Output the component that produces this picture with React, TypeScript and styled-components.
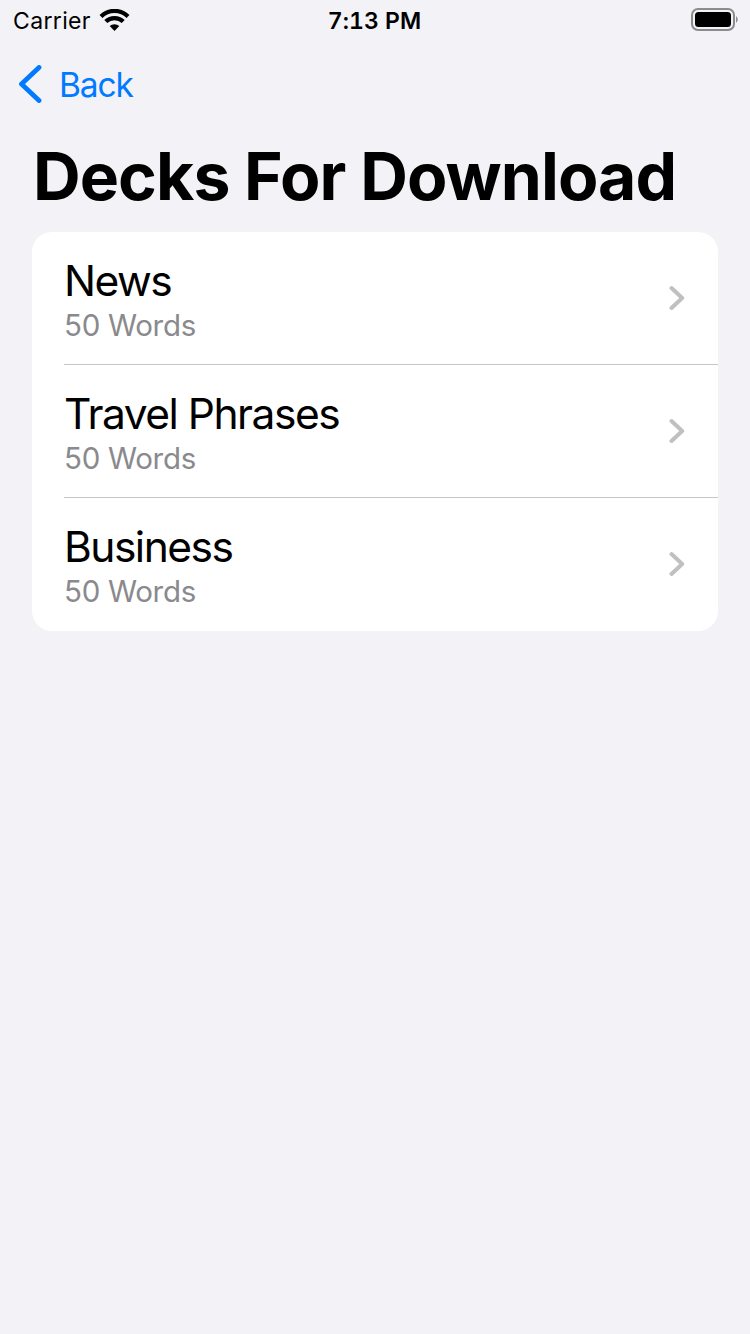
import React from "react";
import styled, { createGlobalStyle } from "styled-components";

const GlobalStyle = createGlobalStyle`
  * { box-sizing: border-box; }
  body { margin: 0; background: #f2f2f7; font-family: Inter, sans-serif; color: #000; }
  h1, p, ul { margin: 0; padding: 0; }
`;

const Screen = styled.main`
  width: 750px;
  min-height: 1334px;
  background: #f2f2f7;
`;

const StatusBar = styled.header`
  display: grid;
  grid-template-columns: 1fr auto 1fr;
  align-items: center;
  height: 40px;
  padding: 0 11px 0 13px;
`;

const Carrier = styled.div`
  display: flex;
  align-items: center;
  gap: 8px;
  font-size: 23px;
  letter-spacing: 0.35px;
  line-height: 38px;
`;

const StatusText = styled.span`
  padding-top: 2px;
`;

const Time = styled.time`
  padding: 2px 3px 0 0;
  font-size: 23px;
  font-weight: 560;
  font-variant-numeric: tabular-nums;
  letter-spacing: 0.05px;
  line-height: 38px;
`;

const BatterySlot = styled.div`
  display: flex;
  justify-content: flex-end;
`;

const NavBar = styled.nav`
  display: flex;
  height: 88px;
  padding-left: 18px;
`;

const BackButton = styled.button`
  display: flex;
  align-items: center;
  gap: 17px;
  border: 0;
  padding: 0;
  background: none;
  color: #007aff;
  font: 400 33.5px/88px Inter, sans-serif;
  letter-spacing: -1.1px;
  white-space: nowrap;
`;

const BackLabel = styled.span`
  line-height: 86px;
  padding-top: 2px;
`;

const Title = styled.h1`
  height: 104px;
  padding-left: 33px;
  font-size: 66px;
  font-weight: 700;
  letter-spacing: -0.93px;
  line-height: 97px;
  white-space: nowrap;
`;

const DeckList = styled.ul`
  margin: 0 32px;
  border-radius: 20px;
  background: #fff;
  list-style: none;
  overflow: hidden;
`;

const DeckRow = styled.li`
  display: flex;
  align-items: center;
  justify-content: space-between;
  height: 133px;
  margin-left: 32px;
  padding-right: 33px;
  border-bottom: 1px solid #c6c6c8;
  &:last-child { border-bottom-color: transparent; }
`;

const DeckInfo = styled.div`
  padding: 1px 0 2px;
`;

const DeckName = styled.p`
  font-size: 42.5px;
  letter-spacing: -1.5px;
  line-height: 54px;
  white-space: nowrap;
`;

const DeckCount = styled.p`
  color: #8a8a8e;
  font-size: 29.5px;
  letter-spacing: -0.3px;
  line-height: 34px;
`;

const decks = ["News", "Travel Phrases", "Business"];

export default function App() {
  return (
    <Screen>
      <GlobalStyle />
      <StatusBar>
        <Carrier>
          <StatusText>Carrier</StatusText>
          <svg width="31" height="22" viewBox="0 0 31 22" fill="none" stroke="#000">
            <path d="M2 7.4a19.3 19.3 0 0 1 27 0" strokeWidth="4.2" />
            <path d="M6.8 12.6a12.4 12.4 0 0 1 17.4 0" strokeWidth="4.2" />
            <path d="M15.5 22l-4.8-4.9a7 7 0 0 1 9.6 0z" fill="#000" stroke="none" />
          </svg>
        </Carrier>
        <Time>7:13 PM</Time>
        <BatterySlot>
          <svg width="48" height="24" viewBox="0 0 48 24">
            <rect x="1" y="1" width="42" height="21" rx="6" fill="none" stroke="#8c8c8f" strokeWidth="2" />
            <rect x="4" y="4" width="36" height="15" rx="3.5" />
            <path d="M45 8q3.5 3.5 0 7z" fill="#8c8c8f" />
          </svg>
        </BatterySlot>
      </StatusBar>
      <NavBar>
        <BackButton>
          <svg width="24" height="38" viewBox="0 0 24 38" fill="none">
            <path d="M21 2.5L3.5 19 21 35.5" stroke="#007aff" strokeWidth="4.8" strokeLinecap="round" strokeLinejoin="round" />
          </svg>
          <BackLabel>Back</BackLabel>
        </BackButton>
      </NavBar>
      <Title>Decks For Download</Title>
      <DeckList>
        {decks.map((name) => (
          <DeckRow key={name}>
            <DeckInfo>
              <DeckName>{name}</DeckName>
              <DeckCount>50 Words</DeckCount>
            </DeckInfo>
            <svg width="16" height="26" viewBox="0 0 16 26" fill="none">
              <path d="M2.5 3L13.2 13 2.5 23" stroke="#c0c0c2" strokeWidth="4" strokeLinecap="round" strokeLinejoin="round" />
            </svg>
          </DeckRow>
        ))}
      </DeckList>
    </Screen>
  );
}
